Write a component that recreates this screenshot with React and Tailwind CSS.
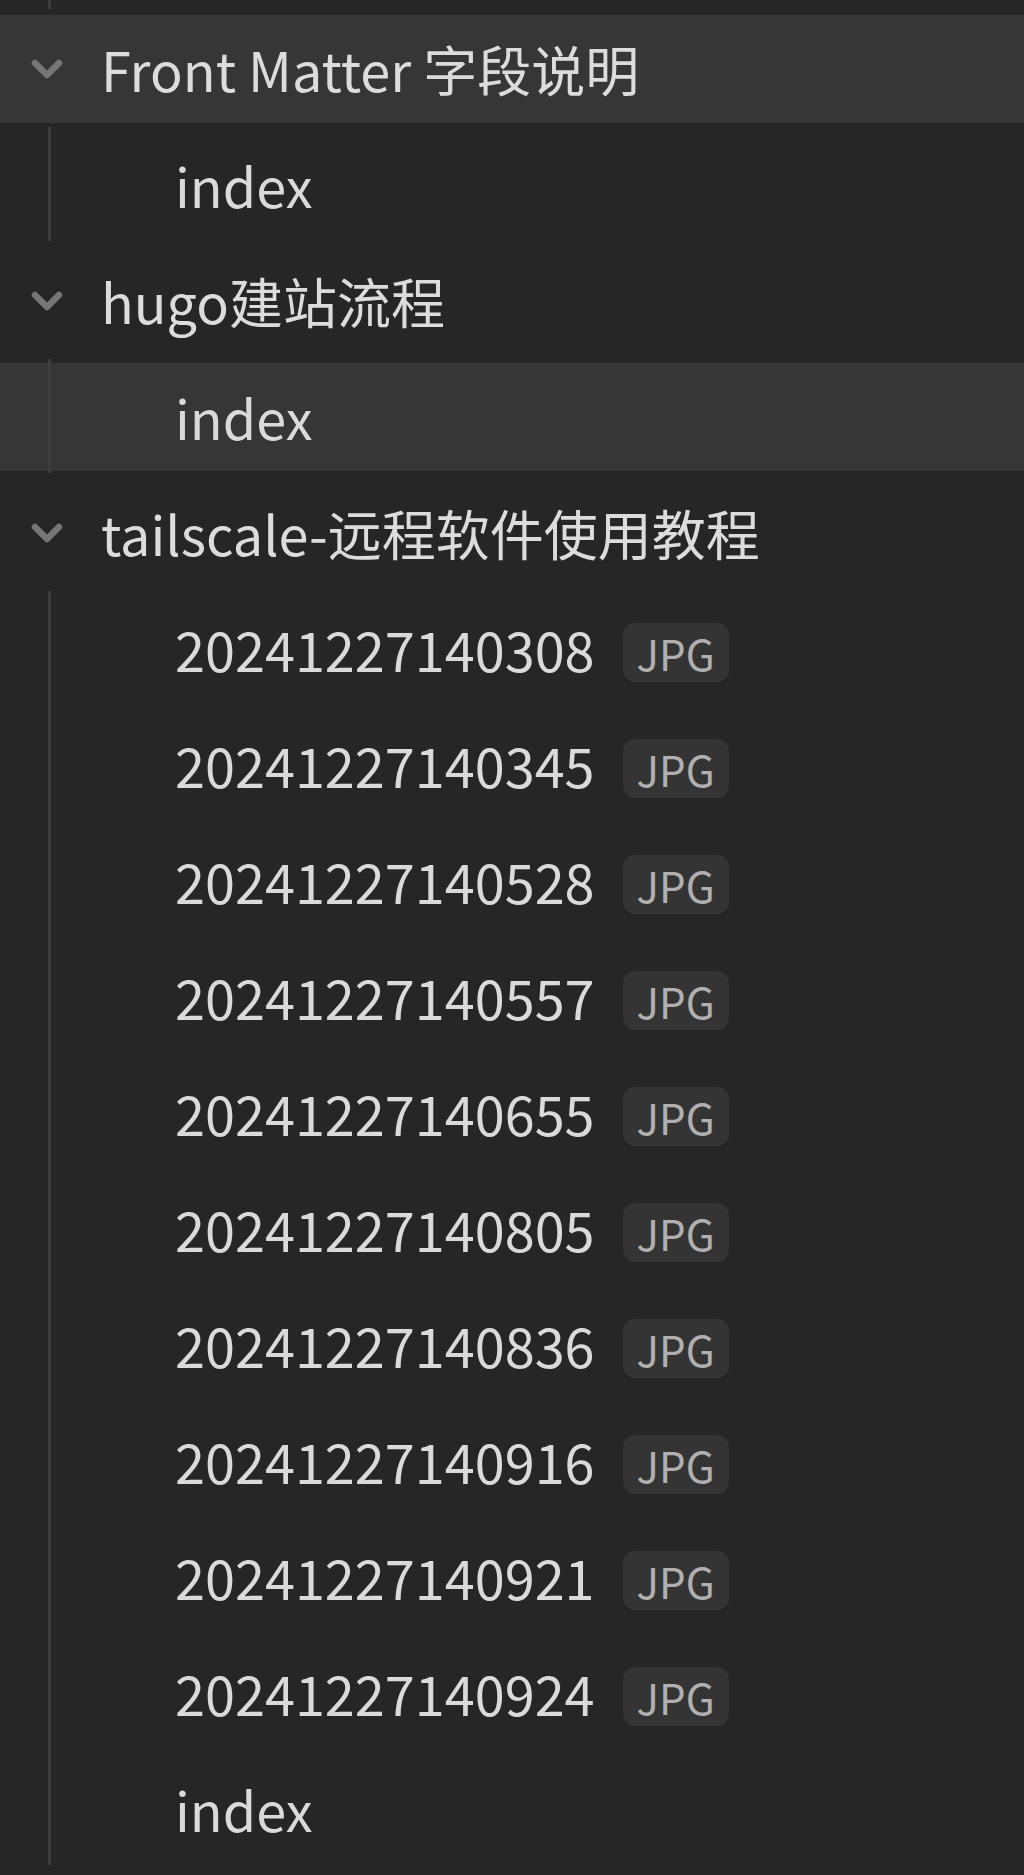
const tree = [
  { name: "Front Matter 字段说明", active: true, children: [{ name: "index" }] },
  { name: "hugo建站流程", children: [{ name: "index", active: true }] },
  {
    name: "tailscale-远程软件使用教程",
    children: [
      { name: "20241227140308", ext: "JPG" },
      { name: "20241227140345", ext: "JPG" },
      { name: "20241227140528", ext: "JPG" },
      { name: "20241227140557", ext: "JPG" },
      { name: "20241227140655", ext: "JPG" },
      { name: "20241227140805", ext: "JPG" },
      { name: "20241227140836", ext: "JPG" },
      { name: "20241227140916", ext: "JPG" },
      { name: "20241227140921", ext: "JPG" },
      { name: "20241227140924", ext: "JPG" },
      { name: "index" },
    ],
  },
];

function Chevron() {
  return (
    <svg width="40" height="40" viewBox="0 0 40 40" fill="none">
      <path
        d="M8 14 L20 26 L32 14"
        stroke="#767676"
        strokeWidth="6.5"
        strokeLinecap="round"
        strokeLinejoin="round"
      />
    </svg>
  );
}

function FileRow({ file }) {
  return (
    <div
      className={`flex items-center h-[108px] pl-[175px] ${
        file.active ? "bg-[#363636]" : ""
      }`}
    >
      <span className="leading-[108px] text-[#dadada]">{file.name}</span>
      {file.ext && (
        <span className="ml-[28px] mt-[7px] h-[59px] px-[14px] rounded-[12px] bg-[#343434] text-[42px] leading-[59px] text-[#b0b0b0]">
          {file.ext}
        </span>
      )}
    </div>
  );
}

function Folder({ folder }) {
  return (
    <>
      <div
        className={`flex items-center h-[108px] ${
          folder.active ? "bg-[#363636]" : ""
        }`}
      >
        <span className="flex w-[101px] shrink-0 pl-[27px]">
          <Chevron />
        </span>
        <span className="leading-[108px] text-[#dcdcdc]">{folder.name}</span>
      </div>
      <div className="relative flex flex-col gap-2">
        {folder.children.map((f, i) => (
          <FileRow key={i} file={f} />
        ))}
        {/* indent guide sits over the rows */}
        <span className="absolute left-[48px] top-[-4px] bottom-[-2px] w-[3px] bg-[#3d3d3d]" />
      </div>
    </>
  );
}

export default function App() {
  return (
    <div className="min-h-screen bg-[#262626] font-['Noto_Sans_CJK_SC',sans-serif] text-[54px] overflow-hidden">
      <div className="relative h-[7px]">
        <span className="absolute left-[48px] top-0 bottom-[-2px] w-[3px] bg-[#3d3d3d]" />
      </div>
      <div className="flex flex-col gap-2 pt-2">
        {tree.map((folder, i) => (
          <Folder key={i} folder={folder} />
        ))}
      </div>
    </div>
  );
}
